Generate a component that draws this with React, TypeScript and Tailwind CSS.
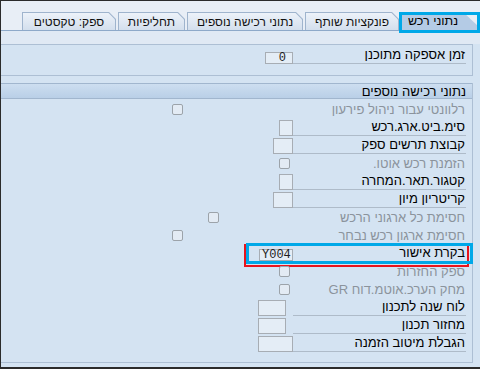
import React from 'react';

type Row = {
  label: string;
  muted?: boolean;
  kind: 'field' | 'check';
  cls: string;
  value?: string;
  mark?: boolean;
};

const rows: Row[] = [
  { label: 'רלוונטי עבור ניהול פירעון', muted: true, kind: 'check', cls: 'mr-[110px]' },
  { label: 'סימ.ביט.ארג.רכש', kind: 'field', cls: 'w-[14px] h-[16px]' },
  { label: 'קבוצת תרשים ספק', kind: 'field', cls: 'w-[20px] h-[16px]' },
  { label: 'הזמנת רכש אוטו.', muted: true, kind: 'check', cls: 'mr-[3px]' },
  { label: 'קטגור.תאר.המחרה', kind: 'field', cls: 'w-[14px] h-[16px]' },
  { label: 'קריטריון מיון', kind: 'field', cls: 'w-[20px] h-[16px]' },
  { label: 'חסימת כל ארגוני הרכש', muted: true, kind: 'check', cls: 'mr-[74px]' },
  { label: 'חסימת ארגון רכש נבחר', muted: true, kind: 'check', cls: 'mr-[110px]' },
  { label: 'בקרת אישור', kind: 'field', cls: 'w-[34px] h-[12px] mb-px justify-start pl-[2px]', value: 'Y004', mark: true },
  { label: 'ספק החזרות', muted: true, kind: 'check', cls: 'mr-[3px]' },
  { label: 'מחק הערכ.אוטמ.דוח GR', muted: true, kind: 'check', cls: 'mr-[3px]' },
  { label: 'לוח שנה לתכנון', kind: 'field', cls: 'w-[28px] h-[16px] mr-[7px]' },
  { label: 'מחזור תכנון', kind: 'field', cls: 'w-[28px] h-[16px] mr-[7px]' },
  { label: 'הגבלת מיטוב הזמנה', kind: 'field', cls: 'w-[35px] h-[16px]' },
];

function Field({ cls, value }: { cls: string; value?: string }) {
  return (
    <div
      dir="ltr"
      className={`shrink-0 flex items-center border border-[#a7adb4] bg-[#e4edf6] font-['Liberation_Mono',monospace] text-[12px] leading-none text-[#1e1e1e] ${cls}`}
    >
      {value}
    </div>
  );
}

function Check({ cls }: { cls: string }) {
  return <div className={`shrink-0 w-[11px] h-[11px] mb-[3px] rounded-[2px] border border-[#9ca3aa] bg-[#e3ebf4] ${cls}`} />;
}

function Tab({ label, w }: { label: string; w: string }) {
  return (
    <div className={`h-[18px] shrink-0 bg-[#9fb4cd] pt-px px-px [clip-path:polygon(0_0,calc(100%_-_7px)_0,100%_7px,100%_100%,0_100%)] ${w}`}>
      <div className="h-full flex items-center justify-center whitespace-nowrap bg-gradient-to-b from-[#edf2f9] to-[#d3dfed] text-[#111] [clip-path:polygon(0_0,calc(100%_-_6.5px)_0,100%_6.5px,100%_100%,0_100%)]">
        {label}
      </div>
    </div>
  );
}

function FormRow({ row }: { row: Row }) {
  return (
    <div className="relative h-[18px] flex items-end pr-[6px]">
      <div
        className={`w-[173px] h-full shrink-0 flex items-end pr-px ${row.kind === 'field' ? 'border-b border-[#aebbc9]' : ''} ${row.muted ? 'text-[#8b939c]' : 'text-black'}`}
      >
        <span className="leading-[16px] whitespace-nowrap">{row.label}</span>
      </div>
      {row.kind === 'field' ? <Field cls={row.cls} value={row.value} /> : <Check cls={row.cls} />}
      {row.mark && (
        <>
          <div className="absolute left-[243px] right-[3px] top-0 bottom-[-5px] border-2 border-[#e8141c] pointer-events-none" />
          <div className="absolute left-[245px] right-[-1px] top-[-1px] bottom-[-2px] border-[3px] border-[#00a8e8] pointer-events-none" />
        </>
      )}
    </div>
  );
}

export default function App() {
  return (
    <div className="w-[480px] h-[369px] overflow-hidden bg-[#2b2b2b] pt-px pl-px pb-[2px]">
      <div
        dir="rtl"
        className="h-[366px] flex flex-col bg-[#d4e3f2] font-['Liberation_Sans','DejaVu_Sans',sans-serif] text-[13px]"
      >
        {/* Tab strip */}
        <div className="h-[30px] shrink-0 flex items-end gap-[2px] pr-[2px] bg-[#e8eef6] border-b border-[#8ea9c9] text-[12px]">
          <div className="relative w-[77px] h-[18px] shrink-0">
            <div className="h-full bg-[#b4cbe5] pr-[20px] pl-[2px] flex items-center whitespace-nowrap text-[12.5px] text-black [clip-path:polygon(0_0,calc(100%_-_15px)_0,100%_14px,100%_100%,0_100%)]">
              נתוני רכש
            </div>
            <div className="absolute left-[-2px] right-[-2px] top-0 bottom-[-3px] border-[3px] border-[#00a8e8]" />
          </div>
          <Tab label="פונקציות שותף" w="w-[94px]" />
          <Tab label="נתוני רכישה נוספים" w="w-[116px]" />
          <Tab label="תחליפיות" w="w-[67px]" />
          <Tab label="ספק: טקסטים" w="w-[94px]" />
        </div>
        <div className="h-[13px] shrink-0 bg-[#e0e9f4]" />

        <div className="pr-[7px]">
          {/* Group 1 */}
          <div className="h-[32px] pt-px border-y border-r border-[#adbfd4]">
            <div className="h-[18px] flex items-end pr-[6px]">
              <div className="w-[173px] h-full shrink-0 flex items-end pr-px border-b border-[#aebbc9] text-black">
                <span className="leading-[16px] whitespace-nowrap">זמן אספקה מתוכנן</span>
              </div>
              <Field cls="w-[28px] h-[12px] justify-end pr-[6px]" value="0" />
            </div>
          </div>

          {/* Group 2 */}
          <div className="mt-[7px] border-r border-b border-[#adbfd4] pb-[10px]">
            <div className="h-[16px] flex items-center pr-[6px] border-y border-[#a1b6ce] bg-gradient-to-b from-[#cddef0] to-[#b9cfe7] text-black leading-none">
              נתוני רכישה נוספים
            </div>
            <div className="pt-px">
              {rows.map((row) => (
                <FormRow key={row.label} row={row} />
              ))}
            </div>
          </div>
        </div>
      </div>
    </div>
  );
}
